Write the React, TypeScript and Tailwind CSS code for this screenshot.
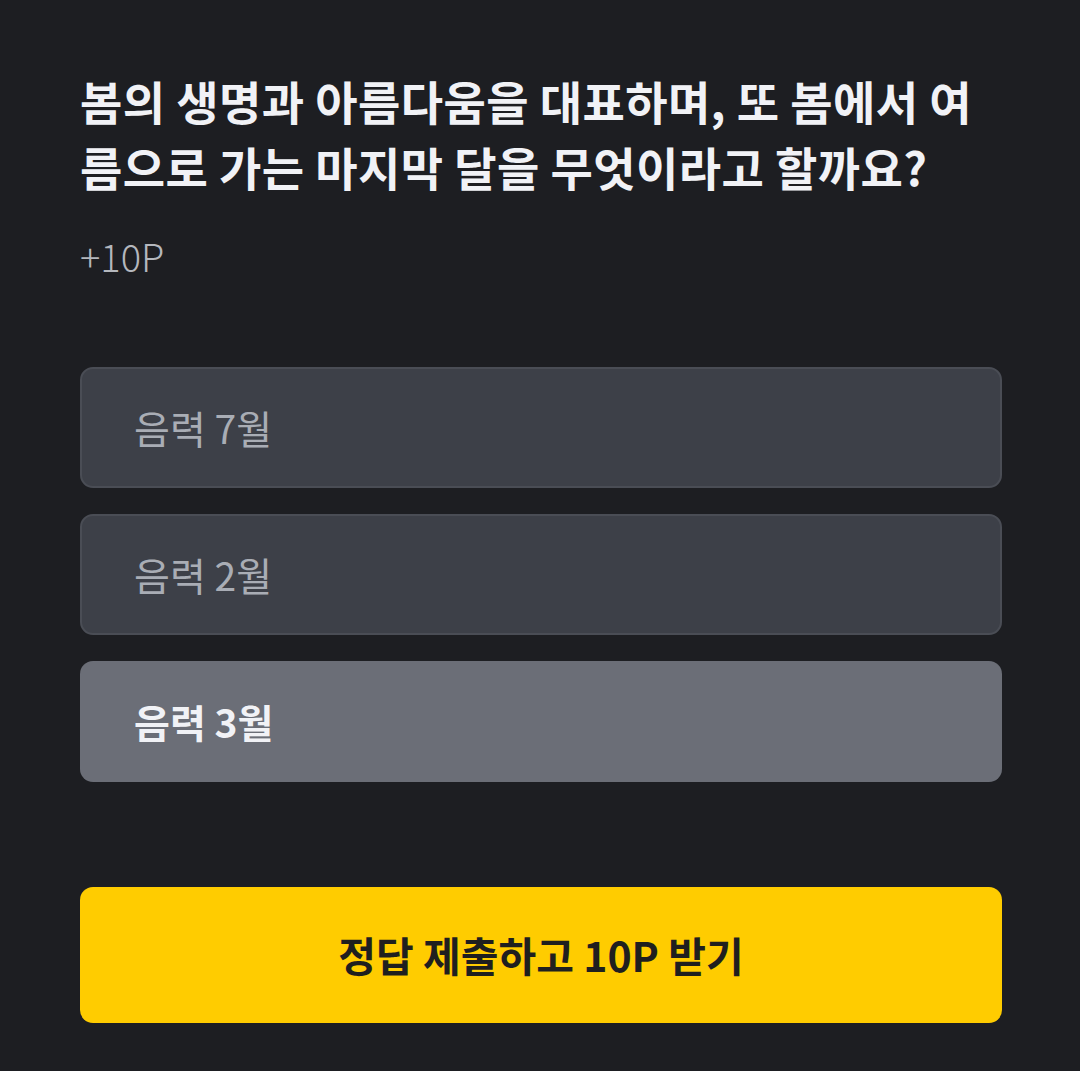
export default function App() {
  const options = [
    { id: 1, label: "음력 7월", selected: false },
    { id: 2, label: "음력 2월", selected: false },
    { id: 3, label: "음력 3월", selected: true },
  ];

  return (
    <div
      className="min-h-[1071px] w-full bg-[#1d1e22] pt-[67px] pr-[78px] pl-[80px]"
      style={{ fontFamily: '"Noto Sans CJK KR", "Noto Sans", sans-serif' }}
    >
      {/* 질문 */}
      <h1 className="text-[46px] leading-[66px] font-bold tracking-[0.4px] whitespace-nowrap text-[#f1f2f6]">
        봄의 생명과 아름다움을 대표하며, 또 봄에서 여
        <br />
        름으로 가는 마지막 달을 무엇이라고 할까요?
      </h1>
      <p className="mt-[34px] text-[38px] leading-[46px] font-light text-[#b4b7bd]">
        +10P
      </p>

      {/* 보기 */}
      <div className="mt-[88px] flex flex-col gap-[26px]">
        {options.map((o) =>
          o.selected ? (
            <div
              key={o.id}
              className="flex h-[121px] items-center rounded-[13px] bg-[#6b6e77] pl-[54px] text-[39px] font-bold text-[#f1f2f6]"
            >
              {o.label}
            </div>
          ) : (
            <div
              key={o.id}
              className="flex h-[121px] items-center rounded-[13px] border-2 border-[#4a4d55] bg-[#3d4048] pl-[52px] text-[39px] font-normal text-[#a9adb5]"
            >
              {o.label}
            </div>
          )
        )}
      </div>

      {/* 제출 버튼 */}
      <button className="mt-[105px] flex h-[136px] w-full items-center justify-center rounded-[13px] bg-[#ffcc00] text-[41px] font-bold text-[#1f1f1f]">
        정답 제출하고 10P 받기
      </button>
    </div>
  );
}
